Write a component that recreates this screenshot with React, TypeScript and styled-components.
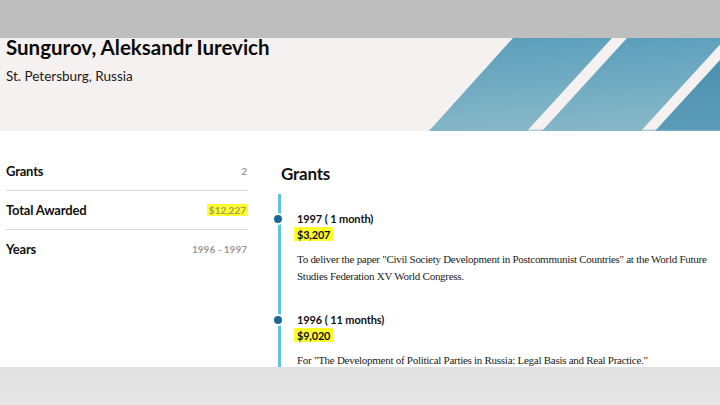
import React from "react";
import styled, { createGlobalStyle } from "styled-components";

const GlobalStyle = createGlobalStyle`
  html, body {
    margin: 0;
    padding: 0;
    background: #fff;
  }
  body {
    font-family: "Lato", "Noto Sans", sans-serif;
    color: #111;
  }
`;

export const Frame = styled.div`
  width: 720px;
  height: 405px;
  display: flex;
  flex-direction: column;
  overflow: hidden;
`;

export const TopBar = styled.div`
  height: 38px;
  flex: none;
  background: #bebebe;
`;

export const BottomBar = styled.div`
  height: 38px;
  flex: none;
  background: linear-gradient(180deg, #e1e1e1, #e6e6e6);
`;

export const Main = styled.main`
  flex: 1;
  min-height: 0;
  clip-path: inset(-8px 0 0 0);
`;

export const Header = styled.header`
  height: 93px;
  background: #f5f1f0;
  display: flex;
  justify-content: space-between;
`;

export const HeaderText = styled.div`
  padding-left: 6px;
`;

export const Name = styled.h1`
  margin: 0;
  font-size: 20.5px;
  line-height: 19px;
  font-weight: 700;
  color: #0c0c0c;
`;

export const Location = styled.div`
  margin-top: 11px;
  font-size: 13.5px;
  line-height: 16px;
  color: #1a1a1a;
`;

export const Stripes = styled.svg`
  width: 291px;
  height: 93px;
  flex: none;
  display: block;
`;

export const Body = styled.div`
  display: flex;
  padding-left: 6px;
`;

export const Summary = styled.div`
  width: 242px;
  padding-top: 21px;
  flex: none;
`;

export const SummaryRow = styled.div<{ $last?: boolean }>`
  height: 38px;
  display: flex;
  align-items: center;
  justify-content: space-between;
  border-bottom: 1px solid ${({ $last }) => ($last ? "transparent" : "#d9d9d9")};
`;

export const Label = styled.span`
  font-size: 13px;
  font-weight: 700;
  letter-spacing: -0.2px;
`;

export const Value = styled.span<{ $mark?: boolean }>`
  font-size: 10px;
  font-weight: 700;
  color: ${({ $mark }) => ($mark ? "#a0a05a" : "#9a9a9a")};
  background: ${({ $mark }) => ($mark ? "#ffff2e" : "transparent")};
  padding: 0 ${({ $mark }) => ($mark ? "2px" : "1px")};
`;

export const Details = styled.section`
  margin-left: 30px;
  padding-top: 33px;
  flex: 1;
`;

export const SectionTitle = styled.h2`
  margin: 0 0 10px 3px;
  font-size: 17px;
  line-height: 20px;
  font-weight: 700;
  letter-spacing: -0.2px;
`;

export const Timeline = styled.div`
  border-left: 3px solid #5ec3df;
  padding: 18px 0 40px 16px;
`;

export const Entry = styled.div`
  position: relative;
  margin-bottom: 28px;

  &::before {
    content: "";
    position: absolute;
    left: -25px;
    top: 1px;
    width: 8px;
    height: 8px;
    border-radius: 50%;
    background: #1c679a;
    border: 2px solid #fff;
  }
`;

export const Period = styled.div`
  font-size: 11px;
  line-height: 14px;
  font-weight: 700;
  letter-spacing: -0.1px;
`;

export const Amount = styled.div`
  line-height: 14px;
  span {
    font-size: 11px;
    font-weight: 700;
    letter-spacing: -0.2px;
    background: #ffff2e;
    padding: 1px 3px 0;
    margin-left: -3px;
  }
`;

export const Purpose = styled.p`
  margin: 9px 0 0;
  width: 436px;
  font-family: "Liberation Serif", "Times New Roman", serif;
  font-size: 11px;
  line-height: 17px;
  letter-spacing: -0.27px;
  color: #222;
`;

type Grant = { period: string; amount: string; purpose: string };

const grants: Grant[] = [
  {
    period: "1997 ( 1 month)",
    amount: "$3,207",
    purpose:
      "To deliver the paper \"Civil Society Development in Postcommunist Countries\" at the World Future Studies Federation XV World Congress.",
  },
  {
    period: "1996 ( 11 months)",
    amount: "$9,020",
    purpose: "For \"The Development of Political Parties in Russia: Legal Basis and Real Practice.\"",
  },
];

const StripeArt = () => (
  <Stripes viewBox="0 0 291 93" preserveAspectRatio="none">
    <defs>
      <linearGradient id="s1" x1="0" y1="0" x2="0.2" y2="1">
        <stop offset="0" stopColor="#579cba" />
        <stop offset="1" stopColor="#86b7c8" />
      </linearGradient>
      <linearGradient id="s3" x1="0" y1="0" x2="0.2" y2="1">
        <stop offset="0" stopColor="#468dac" />
        <stop offset="1" stopColor="#5c9cb9" />
      </linearGradient>
    </defs>
    <polygon points="84,0 183,0 98,93 0,93" fill="url(#s1)" />
    <polygon points="198,0 297,0 212,93 113,93" fill="url(#s1)" />
    <polygon points="311,0 410,0 325,93 226,93" fill="url(#s3)" />
    <rect x="0" y="91.5" width="291" height="1.5" fill="#7fb7cc" opacity="0.6" />
  </Stripes>
);

export default function App() {
  return (
    <>
      <GlobalStyle />
      <Frame>
        <TopBar />
        <Main>
          <Header>
            <HeaderText>
              <Name>Sungurov, Aleksandr Iurevich</Name>
              <Location>St. Petersburg, Russia</Location>
            </HeaderText>
            <StripeArt />
          </Header>
          <Body>
            <Summary>
              <SummaryRow>
                <Label>Grants</Label>
                <Value>2</Value>
              </SummaryRow>
              <SummaryRow>
                <Label>Total Awarded</Label>
                <Value $mark>$12,227</Value>
              </SummaryRow>
              <SummaryRow $last>
                <Label>Years</Label>
                <Value>1996 - 1997</Value>
              </SummaryRow>
            </Summary>
            <Details>
              <SectionTitle>Grants</SectionTitle>
              <Timeline>
                {grants.map((g) => (
                  <Entry key={g.period}>
                    <Period>{g.period}</Period>
                    <Amount>
                      <span>{g.amount}</span>
                    </Amount>
                    <Purpose>{g.purpose}</Purpose>
                  </Entry>
                ))}
              </Timeline>
            </Details>
          </Body>
        </Main>
        <BottomBar />
      </Frame>
    </>
  );
}
